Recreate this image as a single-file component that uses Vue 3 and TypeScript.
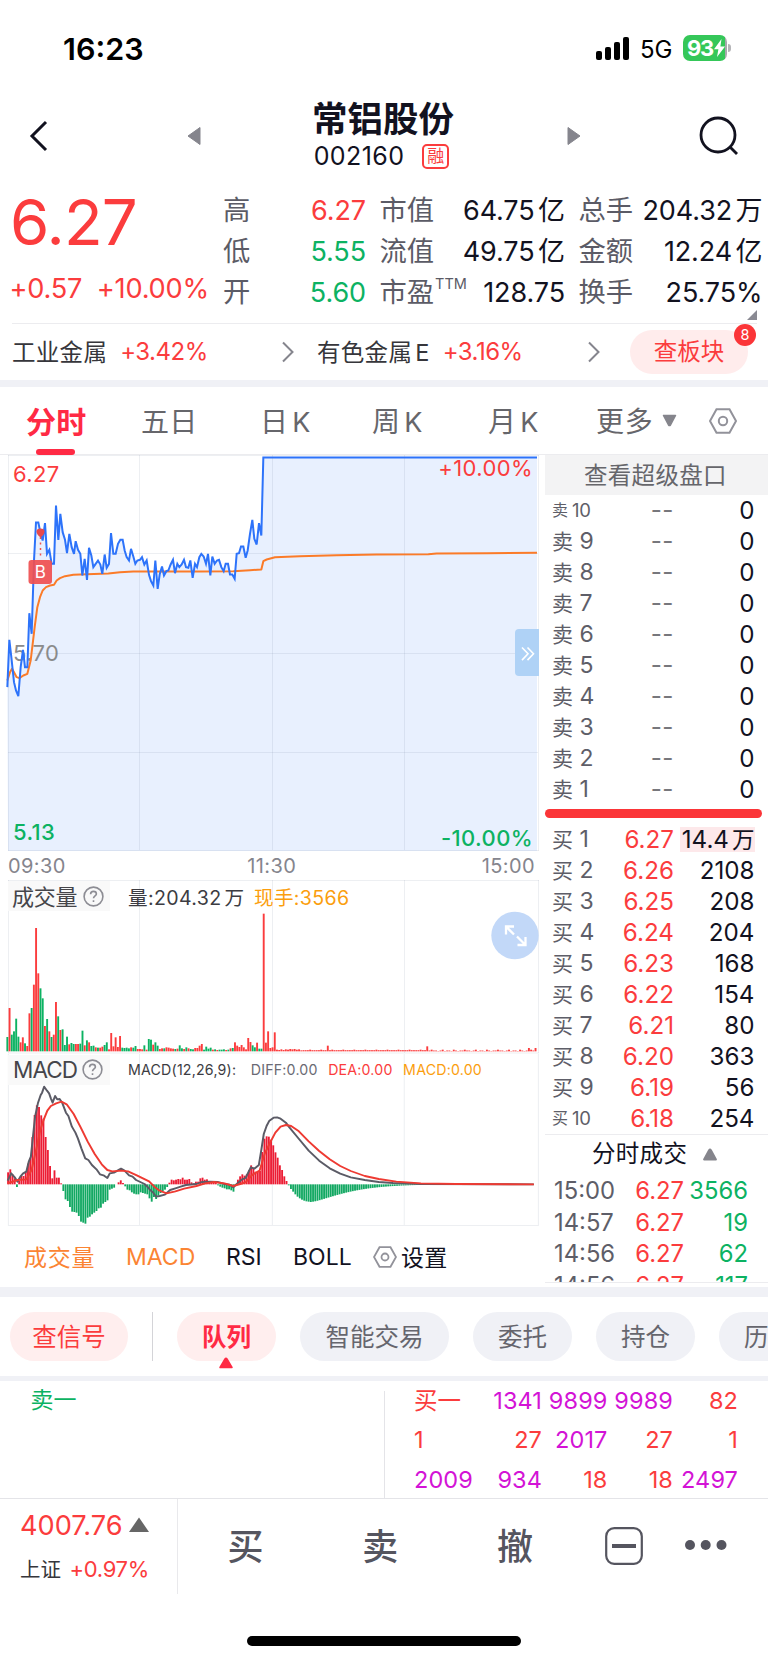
<script setup lang="ts">
interface Level { label: string; price: string; volume: string; hot?: boolean }
interface Trade { time: string; price: string; volume: string }
interface Bar { x: number; y: number; h: number; color: string }

const RED = '#fb3c3d'
const GREEN = '#0cb262'

const stats = [
  ['高', '6.27', 'up', '市值', '64.75', '亿', '总手', '204.32', '万'],
  ['低', '5.55', 'down', '流值', '49.75', '亿', '金额', '12.24', '亿'],
  ['开', '5.60', 'down', '市盈', '128.75', '', '换手', '25.75%', ''],
]

const asks: Level[] = [10, 9, 8, 7, 6, 5, 4, 3, 2, 1].map((n) => ({ label: String(n), price: '--', volume: '0' }))
const bids: Level[] = [
  { label: '1', price: '6.27', volume: '14.4', hot: true },
  { label: '2', price: '6.26', volume: '2108' },
  { label: '3', price: '6.25', volume: '208' },
  { label: '4', price: '6.24', volume: '204' },
  { label: '5', price: '6.23', volume: '168' },
  { label: '6', price: '6.22', volume: '154' },
  { label: '7', price: '6.21', volume: '80' },
  { label: '8', price: '6.20', volume: '363' },
  { label: '9', price: '6.19', volume: '56' },
  { label: '10', price: '6.18', volume: '254' },
]
const trades: Trade[] = [
  { time: '15:00', price: '6.27', volume: '3566' },
  { time: '14:57', price: '6.27', volume: '19' },
  { time: '14:56', price: '6.27', volume: '62' },
  { time: '14:56', price: '6.27', volume: '117' },
]
const queue = [
  ['买一', '1341', '9899', '9989', '82'],
  ['1', '27', '2017', '27', '1'],
  ['2009', '934', '18', '18', '2497'],
]
const isLarge = (v: string) => Number(v) > 900

const priceLine =
  '22,710 28,568 34,620 42,695 48,720 55,737 62,650 69,598 75,650 82,650 88,488 95,550 102,330 108,216 115,216 122,250 128,270 135,218 141,310 148,298 155,340 162,340 168,165 175,268 181,190 188,245 195,268 201,308 208,250 215,290 222,310 227,272 234,298 241,310 247,375 254,325 261,388 267,292 274,315 280,350 287,340 294,330 301,342 307,370 314,312 320,352 327,340 333,248 340,310 347,310 354,280 361,268 368,268 374,300 380,320 387,330 393,295 400,318 406,340 412,330 420,328 426,320 433,342 440,330 447,373 453,392 460,405 466,330 473,415 479,372 486,348 492,375 499,362 505,360 512,342 519,328 525,368 532,340 538,350 545,342 552,328 558,350 565,352 571,330 578,382 585,340 591,350 598,320 604,310 611,318 618,340 624,310 631,375 637,318 644,340 651,330 657,328 664,350 671,362 677,340 684,340 690,372 697,372 704,385 710,310 717,308 723,288 730,288 737,322 743,300 750,250 757,208 763,265 770,282 777,218 784,255 790,21 1611,21'
const averageLine =
  '22,690 30,665 36,655 42,665 50,680 58,683 70,675 82,670 92,630 98,580 104,530 112,470 120,440 128,420 138,410 150,405 162,403 170,390 180,383 195,377 220,373 260,371 325,369 360,365 400,363 600,363 700,362 750,359 784,357 790,332 800,327 825,320 900,317 1010,314 1130,312 1285,311 1310,309 1460,308 1611,307'

const volumeData =
  'g43 r130 g50 g60 g98 g44 r27 r42 g24 r16 r114 g130 r200 r370 r234 g189 g159 r76 g97 r60 g43 r50 r148 g105 r64 g66 g19 g44 r21 g25 g22 r22 r22 g23 g62 r18 g33 r27 g16 g17 r12 g11 r11 r14 g19 g27 r6 r55 r15 r42 r13 r46 g11 g10 g11 g9 r12 g11 g16 r7 r7 r6 g18 r5 g37 g35 r20 g27 g17 r7 r9 g9 r12 r11 r9 r8 g7 r8 g18 g9 r7 g12 r9 g7 g6 r10 r10 r17 r22 g5 g14 g8 g11 r5 g6 r4 g5 g5 g6 r4 g5 r9 g10 r27 r17 r13 r19 r12 r6 r40 r28 g18 g12 r26 g8 g8 r413 r26 r60 r10 r12 r57 r5 r4 r6 r4 r6 r5 r7 r6 r7 r5 r6 r3'
const lateSpikes: Record<number, number> = { 145: 17, 190: 15, 236: 10, 239: 10 }
const volumeTokens = volumeData.split(' ')
const volumeBars: Bar[] = Array.from({ length: 240 }, (_, i) => {
  const token = volumeTokens[i]
  const h = token ? Number(token.slice(1)) : lateSpikes[i] ?? (i % 5 === 2 ? 5 : i < 190 ? 3.5 : i % 3 === 0 ? 1 : 2.5)
  return { x: 19.2 + i * 6.63, y: 754 - h, h, color: token && token[0] === 'g' ? GREEN : RED }
})

const macdHead = [
  36, 45, 30, 18, -8, 10, 25, 25, 38, 62, 78, 142, 208, 237, 232, 207, 197, 142, 103, 55, 18, 42, 20, 20, 3, -20, -45, -50, -68, -82, -83, -85,
  -95, -112, -115, -118, -100, -97, -90, -85, -80, -72, -70, -58, -53, -48, -16, -13, -10, 0, 6, 12, 4, -6, -16, -18, -24, -28, -30, -30, -24,
  -26, -28, -30, -42, -52, -38, -44, -34, -26, -20, -16, -8, 5, 14, 12, 14, 16, 15, 20, 14, 14, 16, 6, 3, 8, 8, 18, 20, 14, 15, 10, 8, 10, 6,
  -3, -7, -10, -12, -15, -15, -18, -22, -4, 14, 24, 30, 26, 30, 42, 57, 50, 38, 38, 40, 97, 137, 144, 143, 134, 117, 96, 80, 57, 43, 24, 10,
  -3, -14, -22, -30, -37, -42, -46, -49, -51, -52, -53, -52,
]
const macdBars: Bar[] = Array.from({ length: 200 }, (_, i) => {
  const v = macdHead[i] ?? -52 * Math.exp(-Math.pow((i - 138) / 19, 1.3))
  return { x: 20.4 + i * 6.3, y: v > 0 ? 403 - v : 403, h: Math.abs(v), color: v > 0 ? '#ec1c34' : '#12a862' }
})
const diffLine =
  '22,392 32,370 42,382 50,395 58,380 66,370 75,365 82,335 88,320 94,260 100,200 108,160 116,135 120,128 126,110 134,122 140,130 145,145 150,158 157,138 163,148 170,147 178,160 188,188 195,198 205,230 215,248 222,265 232,295 243,325 252,330 262,345 275,358 285,373 295,376 306,384 313,370 325,368 335,362 345,356 355,362 368,376 378,380 388,390 400,396 412,402 420,410 428,420 436,427 445,440 455,438 470,434 485,420 500,415 515,410 530,405 560,402 575,396 600,395 620,396 640,402 655,404 665,412 675,402 690,388 700,384 715,352 725,356 738,345 745,300 752,252 760,228 768,212 780,203 790,202 800,206 815,218 825,232 850,264 880,302 910,332 940,355 970,371 1000,382 1040,390 1080,396 1120,399 1200,402 1522,403'
const deaLine =
  '22,400 50,390 75,388 90,360 105,290 115,240 125,208 135,182 145,168 160,160 175,155 190,163 210,192 230,232 250,275 270,312 290,343 306,360 320,364 345,362 365,364 390,376 425,394 440,410 455,422 475,430 500,424 525,416 560,408 585,400 610,396 640,400 665,408 685,402 700,397 720,374 740,362 755,310 770,278 785,248 800,230 815,225 830,228 850,242 880,274 910,303 940,328 970,348 1000,363 1040,378 1080,387 1130,395 1200,400 1300,402 1522,403'
</script>

<template>
  <main class="phone">
    <section class="status">
      <span class="clock">16:23</span>
      <svg class="signal" width="36" height="26" viewBox="0 0 36 26">
        <rect x="1" y="15" width="6" height="9" rx="2" />
        <rect x="10" y="11" width="6" height="13" rx="2" />
        <rect x="19" y="6" width="6" height="18" rx="2" />
        <rect x="28" y="1" width="6" height="23" rx="2" />
      </svg>
      <span class="net">5G</span>
      <span class="battery">
        <span class="pct">93</span>
        <svg width="11" height="18" viewBox="0 0 11 18"><path d="M7.5 0 0 10.2h4.4L3 18l8-10.5H6.4z" fill="#fff" /></svg>
      </span>
      <span class="nub"></span>
    </section>

    <header class="header">
      <svg class="back" width="20" height="32" viewBox="0 0 20 32"><path d="M17 2 3 16l14 14" /></svg>
      <svg class="tri" width="14" height="20" viewBox="0 0 14 20"><path d="M13 1.500v17L1 10z" /></svg>
      <div class="title">
        <h1>常铝股份</h1>
        <div class="code">002160<span class="tag">融</span></div>
      </div>
      <svg class="tri" width="14" height="20" viewBox="0 0 14 20"><path d="M1 1.500v17L13 10z" /></svg>
      <svg class="search" width="42" height="42" viewBox="0 0 42 42"><circle cx="19" cy="19" r="17" /><path d="m31 31 7 7" /></svg>
    </header>

    <section class="quote">
      <div class="last">
        <div class="big">6.27</div>
        <div class="chg"><span>+0.57</span><span>+10.00%</span></div>
      </div>
      <div class="stats">
        <div v-for="s in stats" :key="s[0]" class="stat">
          <span class="lab">{{ s[0] }}</span>
          <span class="val" :class="s[2]">{{ s[1] }}</span>
          <span class="lab">{{ s[3] }}<sup v-if="s[3] === '市盈'">TTM</sup></span>
          <span class="val">{{ s[4] }}<i v-if="s[5]">{{ s[5] }}</i></span>
          <span class="lab">{{ s[6] }}</span>
          <span class="val">{{ s[7] }}<i v-if="s[8]">{{ s[8] }}</i></span>
        </div>
      </div>
      <svg class="corner" width="10" height="10" viewBox="0 0 10 10"><path d="M10 0v10H0z" fill="#8a8a93" /></svg>
    </section>

    <section class="sectors">
      <div class="sector one"><span>工业金属</span><b>+3.42%</b></div>
      <svg class="chev" width="14" height="22" viewBox="0 0 14 22"><path d="m2 1.500 9.500 9.500L2 20.500" /></svg>
      <div class="sector two"><span>有色金属<em>E</em></span><b>+3.16%</b></div>
      <svg class="chev" width="14" height="22" viewBox="0 0 14 22"><path d="m2 1.500 9.500 9.500L2 20.500" /></svg>
      <div class="board">查板块<span class="dot">8</span></div>
    </section>

    <nav class="tabs">
      <span class="tab on">分时</span>
      <span class="tab">五日</span>
      <span class="tab">日<em>K</em></span>
      <span class="tab">周<em>K</em></span>
      <span class="tab">月<em>K</em></span>
      <span class="tab more">更多</span>
      <svg class="down" width="15" height="13" viewBox="0 0 15 13"><path d="M1.500 1.500h12L8.500 11q-1 1.200-2 0z" fill="#85858c" stroke="#85858c" stroke-width="1.500" stroke-linejoin="round" /></svg>
      <svg class="hexa" width="28" height="28" viewBox="0 0 28 28"><path d="M7.500 2.200h13L27 14l-6.500 11.800h-13L1 14z" /><circle cx="14" cy="14" r="4.200" /></svg>
    </nav>

    <section class="body">
      <div class="left">
        <svg class="chart" width="540" height="396" viewBox="0 455 540 396">
          <g transform="translate(0 450) scale(.33333)">
            <polygon :points="priceLine + ' 1611,1203 24,1203'" fill="#e8f0fe" />
          </g>
          <text x="13" y="661" class="num" fill="#8b8b8b">5.70</text>
          <g class="grid">
            <path d="M8.500 455V850.500M139.500 455V850M272.500 455V850M404.500 455V850M538.500 455V850.500M8 455.500H539M8 553.500H538M8 653.500H538M8 752.500H538M8 850.500H539" />
          </g>
          <g transform="translate(0 450.500) scale(.33333)" fill="none" stroke-linejoin="round">
            <polyline :points="averageLine" stroke="#fb7b28" stroke-width="6" />
            <polyline :points="priceLine" stroke="#2d73fa" stroke-width="6" stroke-linejoin="miter" />
          </g>
          <text x="13" y="482" class="num" fill="#fb3c3d">6.27</text>
          <text x="13" y="840" class="num bolder" fill="#0cb262">5.13</text>
          <text x="533" y="476" class="num" text-anchor="end" fill="#fb3c3d">+10.00%</text>
          <text x="533" y="845.500" class="num bolder" text-anchor="end" fill="#0cb262">-10.00%</text>
          <path d="M40.500 537v22" stroke="#ef5350" stroke-width="1.500" stroke-dasharray="2 3.500" />
          <path d="M36.500 531.500q0-3 4-3t4 3q0 3-4 6-4-3-4-6z" fill="#e84a4c" />
          <rect x="28.500" y="560" width="23.500" height="24" rx="3" fill="#ef4f50" fill-opacity=".92" />
          <text x="40.200" y="578.300" class="mark" text-anchor="middle">B</text>
          <path d="M539 629h-20q-4 0-4 4v39q0 4 4 4h20z" fill="#afd2f6" />
          <path d="m522 647.500 6 6.300-6 6.300M527.500 647.500l6 6.300-6 6.300" class="arrow" />
        </svg>
        <div class="axis"><span>09:30</span><span>11:30</span><span>15:00</span></div>
        <div class="panel">
          <svg width="540" height="174" viewBox="0 880 540 174">
            <path class="grid" d="M8.500 880V1053M139.500 880V1053M272.500 880V1053M404.500 880V1053M538.500 880V1053M8 880.500H539M8 1053H539" />
            <g transform="translate(0 800) scale(.33333)">
              <rect v-for="(b, i) in volumeBars" :key="i" :x="b.x" :y="b.y" width="5.700" :height="b.h" :fill="b.color" />
            </g>
            <circle cx="515" cy="935.500" r="23.700" fill="#c2d8f8" />
            <path d="M506 934.500V926.500h8M506.500 927l7.500 7.500M525.500 937v8h-8M525 944.500l-8-8" class="arrow thick" />
          </svg>
          <div class="cap vol">成交量<svg width="21" height="21" viewBox="0 0 21 21" class="help"><circle cx="10.500" cy="10.500" r="9.400" /><path d="M7.600 8.300q0-2.900 2.900-2.900t2.900 2.600c0 1.900-2.900 2-2.900 4.300M10.500 14.300v1.600" /></svg></div>
          <div class="info vinfo"><span>量:204.32<i>万</i></span><span class="amber">现手:3566</span></div>
        </div>
        <div class="panel">
          <svg width="540" height="172" viewBox="0 12 1539.500 516" preserveAspectRatio="none">
            <path class="grid" stroke-width="3" d="M24 12V527M397.700 12V527M776.500 12V527M1152.500 12V527M1535 12V527M23 526.500H1536" />
            <rect v-for="(b, i) in macdBars" :key="i" :x="b.x" :y="b.y" width="5.300" :height="b.h" :fill="b.color" />
            <g fill="none" stroke-linejoin="round" stroke-width="5.600">
              <polyline :points="diffLine" stroke="#5b5b66" />
              <polyline :points="deaLine" stroke="#ee3a32" />
            </g>
          </svg>
          <div class="cap mac">MACD<svg width="21" height="21" viewBox="0 0 21 21" class="help"><circle cx="10.500" cy="10.500" r="9.400" /><path d="M7.600 8.300q0-2.900 2.900-2.900t2.900 2.600c0 1.900-2.900 2-2.900 4.300M10.500 14.300v1.600" /></svg></div>
          <div class="info minfo"><span class="params">MACD(12,26,9):</span><span class="grey">DIFF:0.00</span><span class="up">DEA:0.00</span><span class="amber">MACD:0.00</span></div>
        </div>
        <div class="indicators">
          <span class="on i1">成交量</span><span class="on i2">MACD</span><span class="i3">RSI</span><span class="i4">BOLL</span>
          <svg class="hexb" width="24" height="22" viewBox="0 0 24 22"><path d="M6.500 1.200h11L23 11l-5.500 9.800h-11L1 11z" /><circle cx="12" cy="11" r="3.500" /></svg>
          <span class="i5">设置</span>
        </div>
      </div>

      <aside class="book">
        <div class="super">查看超级盘口</div>
        <div class="levels">
          <div v-for="l in asks" :key="l.label" class="level">
            <span class="side" :class="{ small: l.label === '10' }">卖<i>{{ l.label }}</i></span>
            <span class="dash">{{ l.price }}</span>
            <span class="qty">{{ l.volume }}</span>
          </div>
        </div>
        <div class="bar"></div>
        <div class="levels">
          <div v-for="l in bids" :key="l.label" class="level">
            <span class="side" :class="{ small: l.label === '10' }">买<i>{{ l.label }}</i></span>
            <span class="px">{{ l.price }}</span>
            <span class="qty" :class="{ hot: l.hot }">{{ l.volume }}<i v-if="l.hot">万</i></span>
          </div>
        </div>
        <div class="deals">分时成交<svg width="16" height="13" viewBox="0 0 16 13"><path d="M2 11.500h12L9 2.200q-1-1.400-2 0z" fill="#85858c" stroke="#85858c" stroke-width="1.800" stroke-linejoin="round" /></svg></div>
        <div class="trades">
          <div v-for="(t, i) in trades" :key="i" class="trade">
            <span class="time">{{ t.time }}</span><span class="tp">{{ t.price }}</span><span class="tv">{{ t.volume }}</span>
          </div>
        </div>
      </aside>
    </section>

    <nav class="pills">
      <span class="pill red">查信号</span>
      <span class="rule"></span>
      <span class="pill red bold">队列<svg width="16" height="12" viewBox="0 0 16 12"><path d="M2 10.500h12L9 2q-1-1.500-2 0z" fill="#ff2a44" stroke="#ff2a44" stroke-width="1.500" stroke-linejoin="round" /></svg></span>
      <span class="pill wide">智能交易</span>
      <span class="pill">委托</span>
      <span class="pill">持仓</span>
      <span class="pill">历史</span>
    </nav>

    <section class="queues">
      <div class="sell">卖一</div>
      <div class="buy">
        <template v-for="(row, r) in queue" :key="r">
          <span v-for="(v, c) in row" :key="c" :class="{ large: isLarge(v) }">{{ v }}</span>
        </template>
      </div>
    </section>

    <footer class="footer">
      <div class="index">
        <div class="ix">4007.76<svg width="20" height="16" viewBox="0 0 20 16"><path d="M10 0.500 20 15H0z" fill="#666" /></svg></div>
        <div class="iy">上证<b>+0.97%</b></div>
      </div>
      <span class="act">买</span>
      <span class="act">卖</span>
      <span class="act">撤</span>
      <svg class="minus" width="38" height="38" viewBox="0 0 38 38"><rect x="1.200" y="1.200" width="35.600" height="35.600" rx="8" /><path d="M7 19h24" /></svg>
      <svg class="dots" width="44" height="12" viewBox="0 0 44 12"><circle cx="6" cy="6" r="5" /><circle cx="21.700" cy="6" r="5" /><circle cx="37.500" cy="6" r="5" /></svg>
    </footer>
    <div class="home"></div>
  </main>
</template>

<style>
body { background: #fff; }
</style>

<style scoped>
.phone { width: 768px; height: 1663px; overflow: hidden; background: #fff; color: #12121f; font-family: "Inter", "Noto Sans CJK SC", sans-serif; box-sizing: border-box; display: flex; flex-direction: column; }
.phone * { box-sizing: border-box; }
.phone > * { flex: none; }
span, div, h1 { white-space: nowrap; }
i, em { font-style: normal; }
b { font-weight: 400; }
.up { color: #fb3c3d; }
.down { color: #0cb262; }

.status { height: 99px; display: flex; align-items: center; padding: 0 40px 2px 63px; color: #000; }
.clock { font-size: 30.500px; font-weight: 600; letter-spacing: 0; }
.signal { margin-left: auto; }
.net { font-size: 24px; margin: 1px 0 0 9px; width: 43px; letter-spacing: -0.2px; }
.battery { width: 44px; height: 26px; border-radius: 7px; background: linear-gradient(90deg, #35c759 42px, #a9a9ad 42px); display: flex; align-items: center; padding-left: 4px; color: #fff; margin-top: -1px; }
.pct { font-size: 22px; font-weight: 700; letter-spacing: -1.2px; width: 27px; }
.nub { width: 3px; height: 8px; background: #b5b5b8; border-radius: 0 3px 3px 0; margin: -1px -3px 0 1px; }

.header { height: 90px; display: flex; align-items: center; padding: 0 27px 14px 29px; margin-top: -1px; }
.back { fill: none; stroke: #12121f; stroke-width: 3; margin-right: 138px; }
.tri { fill: #85858d; stroke: #85858d; stroke-width: 1; stroke-linejoin: round; flex: none; }
.title { flex: 1; display: flex; flex-direction: column; align-items: center; padding-right: 2px; }
h1 { margin: 2px 0 0; font-size: 35.500px; line-height: 38px; font-weight: 700; }
.code { font-size: 25px; line-height: 34px; display: flex; align-items: center; letter-spacing: 0.4px; }
.tag { margin-left: 18px; width: 27px; height: 25px; border: 2px solid #fb3c3d; border-radius: 5px; color: #fb3c3d; font-size: 17px; line-height: 20px; text-align: center; letter-spacing: 0; margin-right: 3px; }
.search { fill: none; stroke: #12121f; stroke-width: 2.800; margin: 1px 0 0 118px; }

.quote { height: 136px; margin: 0 11px 0 12px; border-bottom: 1px solid #ececef; display: flex; position: relative; }
.last { flex: none; width: 212px; color: #fb3c3d; }
.big { font-size: 63.500px; line-height: 64px; height: 67px; letter-spacing: -0.8px; margin: 2px 0 0 -2px; }
.chg { display: flex; justify-content: space-between; width: 199.500px; margin-left: -2.500px; font-size: 27.200px; line-height: 64px; letter-spacing: -0.2px; }
.stats { width: 540px; flex: none; margin: 1.500px 0 0 -1px; }
.stat { display: grid; grid-template-columns: 28px 114px 84px 115px 84px 113.500px; height: 41.300px; line-height: 41.300px; font-size: 27px; }
.stat .lab { color: #5b5b66; z-index: 1; font-size: 27.300px; }
.stat .lab:nth-child(1) { padding-left: 0; }
.stat .lab:nth-child(3), .stat .lab:nth-child(5) { padding-left: 14.500px; }
.stat .val { display: flex; justify-content: flex-end; letter-spacing: -0.1px; margin-right: -1px; }
.stat .val i { margin-left: 3.500px; }
.stat sup { font-size: 14.500px; line-height: 10px; vertical-align: 13px; letter-spacing: 0; margin-left: 1px; }
.corner { position: absolute; right: 0; bottom: 3px; }

.sectors { height: 56px; display: flex; align-items: center; font-size: 23.500px; padding: 0 0 1px 12px; color: #36363b; }
.sector { display: flex; align-items: center; letter-spacing: 0.3px; margin-top: -1px; }
.sector b { color: #fb3c3d; font-size: 24px; letter-spacing: -0.5px; margin: 0 0 0 13px; }
.sector em { margin-left: 3px; }
.one { width: 269px; }
.two { width: 270px; margin-left: 22px; }
.chev { fill: none; stroke: #85858d; stroke-width: 2; }
.board { position: relative; width: 118px; height: 44px; line-height: 43px; border-radius: 22px; background: #ffecec; color: #fb3c3d; text-align: center; margin-left: 29px; }
.dot { position: absolute; right: -8px; top: -6px; width: 22px; height: 22px; border-radius: 11px; background: #fb3538; color: #fff; font-size: 14.500px; line-height: 22px; }

.tabs { height: 75px; border-top: 7px solid #f0f1f6; border-bottom: 1px solid #ececef; display: flex; align-items: center; font-size: 28px; color: #66666b; padding-left: 26px; }
.tab { display: block; height: 67px; line-height: 70px; width: 110px; letter-spacing: 0.3px; }
.tab em { margin-left: 4px; font-size: 27px; }
.tab.on { font-size: 30px; font-weight: 700; color: #ff2a44; width: 115px; position: relative; }
.tab.on::after { content: ""; position: absolute; left: 10px; bottom: -1px; width: 39px; height: 6px; border-radius: 3px; background: #ff2a44; }
.tab:nth-child(2) { width: 119px; }
.tab:nth-child(3) { width: 112px; }
.tab:nth-child(4) { width: 116px; }
.tab:nth-child(5) { width: 108px; }
.tab.more { width: 66px; letter-spacing: 0.8px; }
.hexa { margin-left: 32px; fill: none; stroke: #92929a; stroke-width: 2; }

.body { height: 832px; display: flex; }
.left { width: 540px; height: 832px; }
.left svg { display: block; }
.grid { stroke: #5a6a8a; stroke-opacity: .11; fill: none; }
.num { font-size: 22px; letter-spacing: 0.4px; font-family: "Inter", sans-serif; }
.bolder { font-weight: 500; }
.mark { font-size: 17px; fill: #fff; font-family: "Inter", sans-serif; }
.arrow { fill: none; stroke: #fff; stroke-width: 1.600; }
.arrow.thick { stroke-width: 2.300; }
.axis { height: 29px; padding: 0 5px 0 8px; display: flex; justify-content: space-between; font-size: 20px; line-height: 31px; color: #85858d; letter-spacing: 0.4px; }
.axis span:nth-child(2) { position: relative; left: -2px; }
.panel { position: relative; }
.panel + .panel { height: 172px; }
.cap { position: absolute; left: 8px; top: 1px; background: #f9f9f9; display: flex; align-items: center; color: #45454a; }
.vol { width: 102px; height: 30px; font-size: 22px; padding: 0 0 3px 4px; letter-spacing: -0.2px; }
.mac { width: 102px; height: 30px; font-size: 22.500px; padding: 0 0 1px 5px; letter-spacing: -0.9px; }
.help { fill: none; stroke: #8d8d94; stroke-width: 1.600; position: absolute; right: 6px; top: 5px; }
.mac .help { right: 7px; top: 4px; }
.info { position: absolute; left: 128px; display: flex; color: #3c3c42; }
.info i { margin-left: 3px; }
.vinfo { top: 6px; font-size: 19.600px; line-height: 24px; gap: 9.500px; letter-spacing: 0.35px; }
.minfo { top: 4px; font-size: 14.200px; line-height: 24px; gap: 10.500px; letter-spacing: 0.2px; }
.params { margin-right: 4px; }
.grey { color: #6a6a74; }
.amber { color: #fb9e0e; }
.indicators { display: flex; align-items: center; height: 61px; padding: 0 0 0 24px; font-size: 23px; }
.indicators .on { color: #fb8433; }
.i1 { width: 102px; letter-spacing: 0.8px; margin-top: -2px; }
.i2 { width: 100px; }
.i3 { width: 67px; }
.i4 { width: 60px; }
.i5 { letter-spacing: 0.3px; margin-top: -2px; }
.hexb { margin: 0 4px 0 20px; fill: none; stroke: #92929a; stroke-width: 1.800; }

.book { width: 228px; height: 832px; padding-left: 5px; }
.super { height: 40px; line-height: 41px; background: #f3f3f4; color: #66666b; font-size: 23.500px; padding-left: 39px; letter-spacing: 0.3px; }
.level { display: flex; height: 31px; line-height: 31px; padding: 0 13.500px 0 7px; font-size: 24.200px; align-items: center; }
.side { width: 61px; font-size: 21px; color: #5e5e68; display: flex; }
.side i { font-size: 23px; margin-left: 6.500px; }
.side.small { font-size: 16px; }
.side.small i { font-size: 18.500px; letter-spacing: -0.3px; margin-left: 4px; }
.dash { width: 61px; text-align: right; color: #77777c; letter-spacing: 0.5px; }
.px { width: 61px; text-align: right; color: #fb3c3d; }
.qty { margin-left: auto; text-align: right; letter-spacing: 0; }
.qty.hot { background: #fde8ea; height: 25px; line-height: 25px; width: 75px; margin-right: 0; }
.hot i { font-size: 22.500px; margin-left: 3px; }
.bar { width: 216.500px; height: 9px; border-radius: 5px; background: #fb3538; margin: 4px 0 6px; }
.deals { border-top: 1px solid #ececef; height: 41px; line-height: 38px; font-size: 23.500px; padding-left: 47px; letter-spacing: 0.3px; }
.deals svg { margin-left: 15px; vertical-align: 1px; }
.trades { height: 107.500px; overflow: hidden; border-bottom: 1px solid #ececef; }
.trade { display: grid; grid-template-columns: 60px 70px 64px; padding-left: 9px; height: 31.500px; line-height: 31px; font-size: 23.800px; }
.time { color: #5e5e68; }
.tp { color: #fb3c3d; text-align: right; }
.tv { color: #0cb262; text-align: right; }

.pills { height: 94px; border-top: 10px solid #f0f1f6; border-bottom: 5px solid #f0f1f6; display: flex; padding: 15px 0 0 10px; overflow: hidden; }
.pill { width: 99px; height: 49px; line-height: 50px; border-radius: 24.500px; background: #f0f1f6; color: #66666e; text-align: center; font-size: 24.500px; margin-right: 24px; flex: none; position: relative; }
.pill.red { background: #ffeeee; color: #fb3c3d; width: 118px; }
.pill.bold { color: #ff2a44; font-weight: 700; width: 99px; }
.pill.wide { width: 149px; }
.pill svg { position: absolute; left: 41px; bottom: -8px; }
.rule { flex: none; width: 1px; height: 49px; background: #d4d4d8; margin-right: 24px; }

.queues { height: 118px; border-bottom: 1px solid #e4e4e8; display: flex; }
.sell { width: 385px; height: 108px; margin-top: 10px; border-right: 1px solid #e4e4e8; color: #0cb262; font-size: 23px; line-height: 18px; padding-left: 30.500px; }
.buy { display: grid; grid-template-columns: 62px 66px 65.500px 65.500px 65px; grid-auto-rows: 39.300px; line-height: 39px; padding-left: 29px; color: #fb3c3d; text-align: right; font-size: 23.500px; letter-spacing: 0.1px; }
.buy span:nth-child(5n + 1) { text-align: left; }
.buy .large { color: #d313d6; }

.footer { height: 95px; display: flex; align-items: center; }
.index { width: 178px; height: 95px; border-right: 1px solid #e9e9ec; padding-left: 20px; }
.ix { color: #fb3c3d; font-size: 27.200px; line-height: 54px; letter-spacing: 0; display: flex; align-items: center; height: 54px; }
.ix svg { margin: -2px 0 0 6px; }
.iy { font-size: 20.500px; line-height: 32px; color: #36363b; }
.iy b { color: #fb3c3d; font-size: 22px; letter-spacing: -0.3px; margin-left: 8.500px; }
.act { font-size: 36px; font-weight: 500; color: #55555f; width: 134.800px; text-align: center; margin-top: -6px; }
.minus { margin: -2px 0 0 23px; fill: none; stroke: #55555f; stroke-width: 2.200; }
.minus path { stroke-width: 4; }
.dots { margin: -3px 0 0 41px; fill: #55555f; }
.home { width: 274px; height: 10px; border-radius: 5px; background: #000; margin: 42px 0 0 247px; }
</style>
